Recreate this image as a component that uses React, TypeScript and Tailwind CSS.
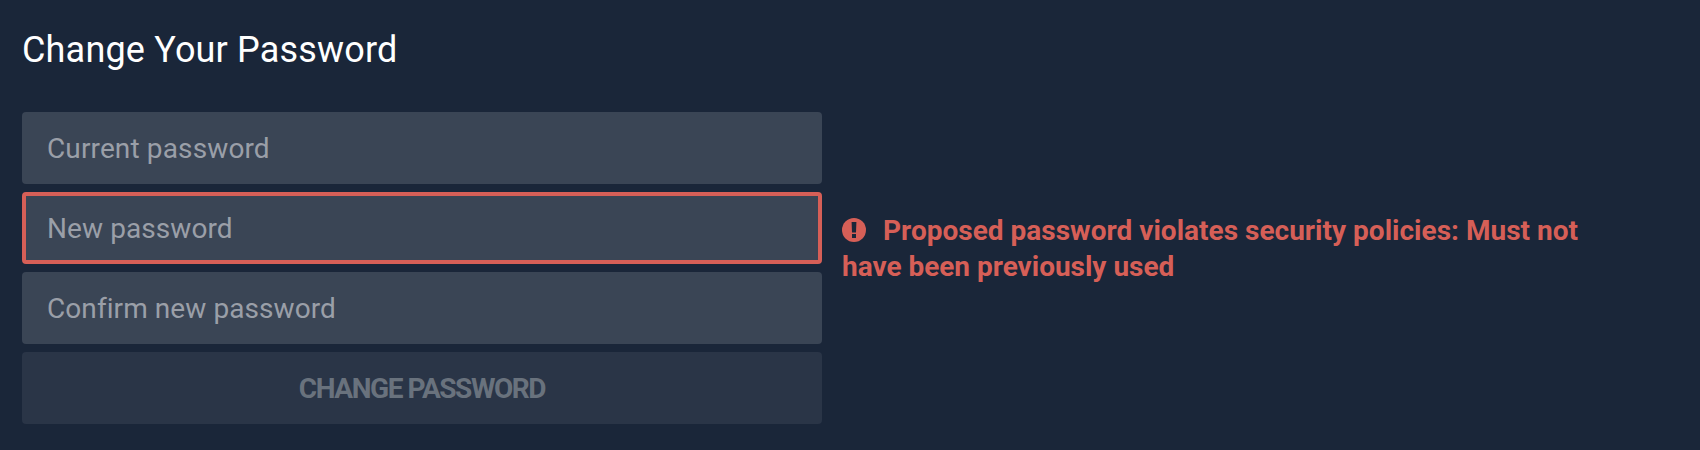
import React from "react";

const field = "block h-[72px] w-[800px] rounded-[4px] bg-[#3a4555] px-[25px] pt-[20px] pb-[19px] text-[28px] leading-[33px] text-white outline-none placeholder:text-[#9a9fa8] placeholder:opacity-100";

export default function App() {
  return (
    <main className="h-[450px] w-full overflow-hidden bg-[#1a2639] pl-[22px] pt-[26px] font-['Roboto',sans-serif]">
      <h1 className="h-[48px] text-[36px] leading-[48px] tracking-[0.18px] text-white">Change Your Password</h1>
      <form className="mt-[38px] flex flex-col gap-2">
        <input className={`${field} tracking-[0.13px]`} placeholder="Current password" />
        <div className="flex">
          <input className="block h-[72px] w-[800px] rounded-[4px] border-4 border-[#d65f57] bg-[#3a4555] px-[21px] pt-[16px] pb-[15px] text-[28px] leading-[33px] tracking-[0.08px] text-white outline-none placeholder:text-[#9a9fa8] placeholder:opacity-100" placeholder="New password" />
          <div className="ml-5 mt-[21px] h-[51px] w-[760px] text-[28px] font-bold leading-[36px] text-[#d65f57]">
            <svg viewBox="0 0 24 24" className="mr-[17px] inline-block h-6 w-6 align-[-2px]">
              <circle cx="12" cy="12" r="12" fill="currentColor" />
              <path d="M9.6 4h4.8l-.4 10.5h-4zM10 16h4v4h-4z" fill="#1a2639" />
            </svg>
            <span className="tracking-[0.01px]">Proposed password violates security policies: Must not</span>
            <br />
            <span className="tracking-[-0.02px]">have been previously used</span>
          </div>
        </div>
        <input className={`${field} tracking-[0.08px]`} placeholder="Confirm new password" />
        <button type="button" className="h-[72px] w-[800px] rounded-[4px] bg-[#2a3547] pt-[20px] pb-[19px] text-[28px] font-bold leading-[33px] tracking-[-1.43px] text-[#69727d]">CHANGE PASSWORD</button>
      </form>
    </main>
  );
}
